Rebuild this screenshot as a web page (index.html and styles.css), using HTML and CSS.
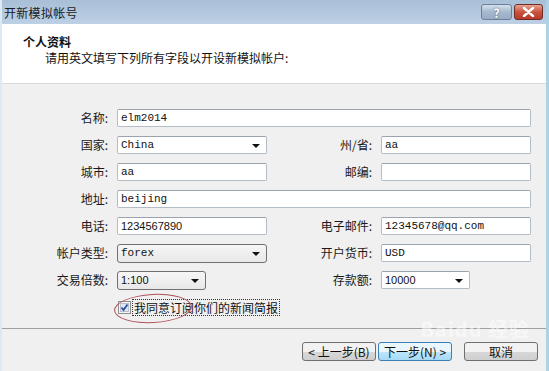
FILE: index.html
```html
<!DOCTYPE html>
<html lang="zh-CN">
<head>
    <meta charset="UTF-8">
    <title>开新模拟帐号</title>
    <link rel="stylesheet" href="styles.css">
</head>
<body>
    <div class="window">
        <div class="titlebar">
            <span class="title">开新模拟帐号</span>
            <div class="caption">
                <span class="cap help">?</span>
                <span class="cap close">
                    <svg width="13" height="10" viewBox="0 0 13 10"><path d="M2 1 L11 9 M11 1 L2 9" stroke="#fff" stroke-width="2.4" stroke-linecap="round"/></svg>
                </span>
            </div>
        </div>

        <div class="dialog">
            <div class="header">
                <h1>个人资料</h1>
                <p>请用英文填写下列所有字段以开设新模拟帐户:</p>
            </div>

            <div class="body">
                <div class="form">
                    <label>名称:</label>
                    <div class="field wide mono">elm2014</div>

                    <label>国家:</label>
                    <div class="field combo mono">China<span class="arrow"></span></div>
                    <label>州/省:</label>
                    <div class="field mono">aa</div>

                    <label>城市:</label>
                    <div class="field mono">aa</div>
                    <label>邮编:</label>
                    <div class="field"></div>

                    <label>地址:</label>
                    <div class="field wide mono">beijing</div>

                    <label>电话:</label>
                    <div class="field">1234567890</div>
                    <label>电子邮件:</label>
                    <div class="field mono">12345678@qq.com</div>

                    <label>帐户类型:</label>
                    <div class="field list mono">forex<span class="arrow"></span></div>
                    <label>开户货币:</label>
                    <div class="field mono">USD</div>

                    <label>交易倍数:</label>
                    <div class="field list short">1:100<span class="arrow"></span></div>
                    <label>存款额:</label>
                    <div class="field combo short">10000<span class="arrow"></span></div>

                    <span></span>
                    <div class="agree">
                        <svg class="check" width="13" height="13" viewBox="0 0 13 13">
                            <rect x="0.5" y="0.5" width="12" height="12" fill="#f4f4f4" stroke="#8e8f8f"/>
                            <rect x="2.5" y="2.5" width="8" height="8" fill="#dfe5ee" stroke="#b8c0cc"/>
                            <path d="M3.5 6.5 L5.5 9 L9.5 3.5" fill="none" stroke="#2a4f9c" stroke-width="1.8"/>
                        </svg>
                        <span class="agree-text">我同意订阅你们的新闻简报</span>
                    </div>
                </div>
                <div class="ring"></div>
                <span class="watermark">Baidu 经验</span>
            </div>

            <div class="footer">
                <button class="btn">&lt; 上一步(B)</button>
                <button class="btn default">下一步(N) &gt;</button>
                <button class="btn cancel">取消</button>
            </div>
        </div>
    </div>
</body>
</html>
```

FILE: styles.css
```css
html, body { margin: 0; padding: 0; }
body { width: 549px; height: 371px; overflow: hidden; font-family: "Noto Sans CJK SC", "Noto Sans", sans-serif; font-size: 12px; color: #111; background: #a9d4e8; }

.window { height: 371px; display: flex; flex-direction: column; margin-right: 3px; background: #f0f0f0; border-left: 2px solid #dde9f4; }

.titlebar { height: 24px; flex: none; display: flex; align-items: center; justify-content: space-between; background: linear-gradient(#a8bfd7, #bdd0e4); padding-left: 2px; }
.title { font-size: 12px; color: #1a1a1a; letter-spacing: 0.3px; }
.caption { display: flex; gap: 2px; align-self: flex-start; margin-top: 4px; margin-right: 3px; }
.cap { height: 16px; box-sizing: border-box; display: flex; align-items: center; justify-content: center; border: 1px solid #6d7f98; border-radius: 3px; }
.help { width: 31px; background: linear-gradient(#d5e0ec, #a6b8ce 50%, #98adc6); color: #fff; font-weight: bold; font-size: 12px; text-shadow: 0 0 2px #44566e; }
.close { width: 29px; background: linear-gradient(#e8a593, #c9523d 50%, #b8392a); border-color: #6e2c27; }

.dialog { flex: 1; display: flex; flex-direction: column; }

.header { background: #fff; height: 60px; box-sizing: border-box; padding: 10px 0 0 21px; border-bottom: 1px solid #d8d8d8; }
.header h1 { margin: 0; font-size: 12px; font-weight: bold; line-height: 16px; }
.header p { margin: 0; padding-left: 22px; line-height: 16px; }

.body { position: relative; flex: 1; padding-top: 25px; border-bottom: 1px solid #a0a0a0; }
.form { display: grid; grid-template-columns: 106px 150px 96px 150px; grid-auto-rows: 18px; column-gap: 9px; row-gap: 9px; align-items: center; }
.form label { text-align: right; white-space: nowrap; line-height: 18px; color: #1a1a1a; }

.field { position: relative; height: 18px; box-sizing: border-box; border: 1px solid #b4bcc6; border-top-color: #9aa3ae; border-radius: 2px; background: #fff; padding: 0 3px; line-height: 16px; font-family: "Liberation Sans", sans-serif; font-size: 11px; }
.field.wide { grid-column: 2 / 5; }
.field.mono { font-family: "Liberation Mono", monospace; font-size: 11px; }
.field.short { width: 89px; }
.field.list { height: 19px; border: 1px solid #707070; border-radius: 3px; background: linear-gradient(#f6f6f6, #e8e8e8); line-height: 17px; }
.combo, .list { padding-right: 18px; }
.arrow { position: absolute; right: 6px; top: 7px; width: 0; height: 0; border-left: 4px solid transparent; border-right: 4px solid transparent; border-top: 4px solid #111; }

.agree { display: flex; align-items: center; gap: 2px; margin-left: 1px; }
.check { flex: none; }
.agree-text { outline: 1px dotted #333; font-size: 12px; line-height: 15px; white-space: nowrap; padding: 0 1px; }
.ring { position: absolute; left: 112px; top: 210px; width: 78px; height: 29px; border: 1px solid #b0505a; border-radius: 50%; box-sizing: border-box; transform: rotate(-3deg); }
.watermark { position: absolute; right: 16px; bottom: -12px; font-size: 20px; line-height: 22px; font-weight: bold; color: rgba(255,255,255,0.55); letter-spacing: 1px; }

.footer { height: 42px; flex: none; display: flex; align-items: flex-start; justify-content: flex-end; padding: 13px 8px 0 0; box-sizing: border-box; }
.btn { width: 74px; height: 19px; margin: 0 0 0 2px; padding: 0; border: 1px solid #707070; border-radius: 3px; background: linear-gradient(#f2f2f2 50%, #d8d8d8 50%, #cfcfcf); font-family: "Noto Sans CJK SC", sans-serif; font-size: 12px; line-height: 16px; color: #111; }
.btn.default { border-color: #3c7fb1; background: linear-gradient(#eaf6fd 50%, #bee6fd 50%, #a7d9f5); }
.btn.cancel { margin-left: 12px; }
```
